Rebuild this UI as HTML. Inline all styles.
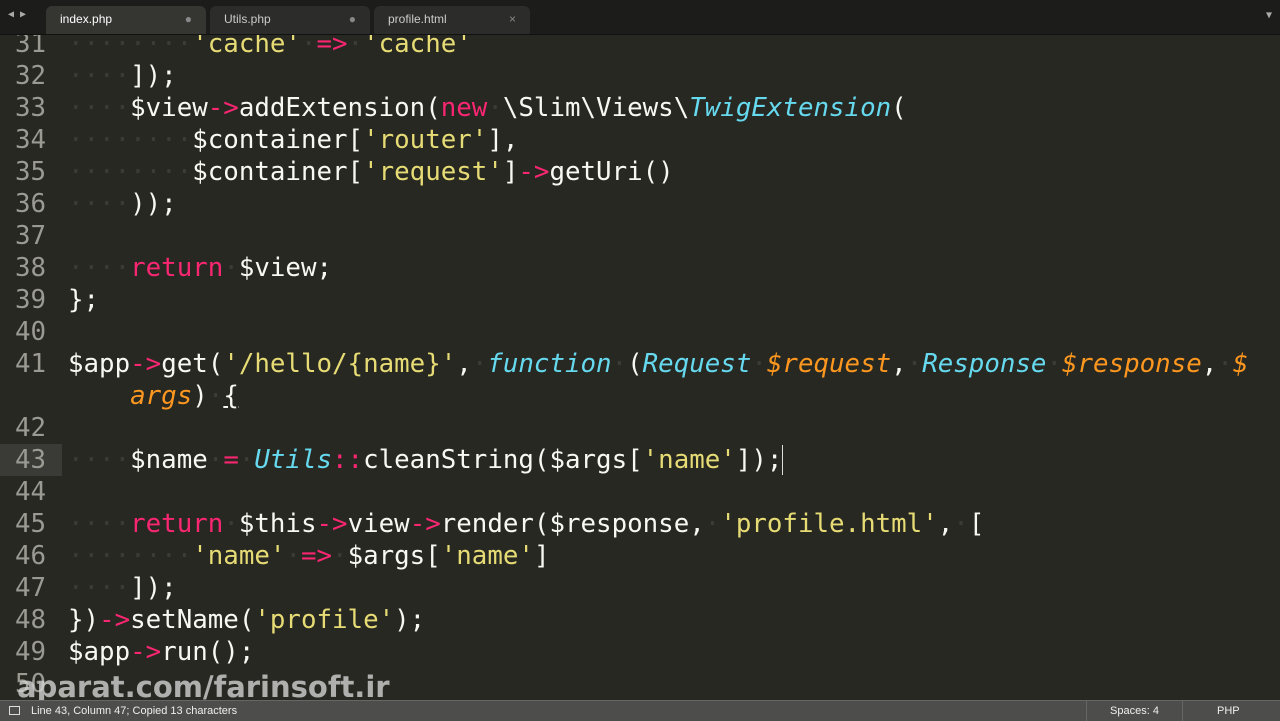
<!DOCTYPE html>
<html><head><meta charset="utf-8"><style>
body{margin:0;width:1280px;height:720px;overflow:hidden;background:#272822;position:relative;font-family:"DejaVu Sans Mono","Liberation Mono",monospace}
#tabs{position:absolute;left:0;top:0;width:1280px;height:34px;background:#1c1c1a;border-bottom:1px solid #111}
.tab{position:absolute;top:6px;height:28px;font:12px "Liberation Sans",sans-serif;color:#ccc;line-height:26px;padding-left:14px;box-sizing:border-box;border-radius:6px 6px 0 0;background:#2c2c2a}
.tab.a{background:#353531;color:#fff}
.tab span{position:absolute;right:14px;color:#888}
#code{position:absolute;left:0;top:28px;width:1280px;font-size:25.8px;line-height:32px;color:#f8f8f2}
.r{height:32px;position:relative;white-space:pre}
.n{position:absolute;left:0;width:46px;text-align:right;color:#9a9a93}
.c{position:absolute;left:68px}
.d{color:#3c3c37}.k{color:#f92672}.s{color:#e6db74}.f{color:#66d9ef;font-style:italic}.o{color:#fd971f;font-style:italic}
#status{position:absolute;left:0;top:700px;width:1280px;height:20px;background:#4d4d4b;border-top:1px solid #666;font:11px "Liberation Sans",sans-serif;color:#eee;line-height:20px}
#wm{position:absolute;left:17px;top:670px;font:bold 29px "DejaVu Sans",sans-serif;color:rgba(210,210,210,0.8)}
</style></head><body>
<div id="code"><div class="r"><span class="n">31</span><span class="c"><span class="d">········</span><span class="s">'cache'</span><span class="d">·</span><span class="k">=&gt;</span><span class="d">·</span><span class="s">'cache'</span></span></div><div class="r"><span class="n">32</span><span class="c"><span class="d">····</span>]);</span></div><div class="r"><span class="n">33</span><span class="c"><span class="d">····</span>$view<span class="k">-&gt;</span>addExtension(<span class="k">new</span><span class="d">·</span>\Slim\Views\<span class="f">TwigExtension</span>(</span></div><div class="r"><span class="n">34</span><span class="c"><span class="d">········</span>$container[<span class="s">'router'</span>],</span></div><div class="r"><span class="n">35</span><span class="c"><span class="d">········</span>$container[<span class="s">'request'</span>]<span class="k">-&gt;</span>getUri()</span></div><div class="r"><span class="n">36</span><span class="c"><span class="d">····</span>));</span></div><div class="r"><span class="n">37</span></div><div class="r"><span class="n">38</span><span class="c"><span class="d">····</span><span class="k">return</span><span class="d">·</span>$view;</span></div><div class="r"><span class="n">39</span><span class="c">};</span></div><div class="r"><span class="n">40</span></div><div class="r"><span class="n">41</span><span class="c">$app<span class="k">-&gt;</span>get(<span class="s">'/hello/{name}'</span>,<span class="d">·</span><span class="f">function</span><span class="d">·</span>(<span class="f">Request</span><span class="d">·</span><span class="o">$request</span>,<span class="d">·</span><span class="f">Response</span><span class="d">·</span><span class="o">$response</span>,<span class="d">·</span><span class="o">$</span></span></div><div class="r"><span class="c">    <span class="o">args</span>)<span class="d">·</span><u>{</u></span></div><div class="r"><span class="n">42</span></div><div class="r"><span class="n" style="background:#3a3a36;width:62px;padding-right:16px;box-sizing:border-box">43</span><span class="c"><span class="d">····</span>$name<span class="d">·</span><span class="k">=</span><span class="d">·</span><span class="f">Utils</span><span class="k">::</span>cleanString($args[<span class="s">'name'</span>]);<span style="border-left:1px solid #ddd"></span></span></div><div class="r"><span class="n">44</span></div><div class="r"><span class="n">45</span><span class="c"><span class="d">····</span><span class="k">return</span><span class="d">·</span>$this<span class="k">-&gt;</span>view<span class="k">-&gt;</span>render($response,<span class="d">·</span><span class="s">'profile.html'</span>,<span class="d">·</span>[</span></div><div class="r"><span class="n">46</span><span class="c"><span class="d">········</span><span class="s">'name'</span><span class="d">·</span><span class="k">=&gt;</span><span class="d">·</span>$args[<span class="s">'name'</span>]</span></div><div class="r"><span class="n">47</span><span class="c"><span class="d">····</span>]);</span></div><div class="r"><span class="n">48</span><span class="c">})<span class="k">-&gt;</span>setName(<span class="s">'profile'</span>);</span></div><div class="r"><span class="n">49</span><span class="c">$app<span class="k">-&gt;</span>run();</span></div><div class="r"><span class="n">50</span></div></div>
<div id="tabs">
<div style="position:absolute;left:8px;top:9px;color:#aaa;font-size:10px">◀ ▶</div>
<div class="tab a" style="left:46px;width:160px">index.php<span>●</span></div>
<div class="tab" style="left:210px;width:160px">Utils.php<span>●</span></div>
<div class="tab" style="left:374px;width:156px">profile.html<span>×</span></div>
<div style="position:absolute;right:8px;top:10px;color:#aaa;font-size:10px">▼</div>
</div>
<div id="wm">aparat.com/farinsoft.ir</div>
<div id="status">
<span style="position:absolute;left:9px;top:5px;width:11px;height:9px;border:1px solid #ddd;box-sizing:border-box"></span>
<span style="position:absolute;left:31px">Line 43, Column 47; Copied 13 characters</span>
<span style="position:absolute;left:1086px;width:95px;height:20px;border-left:1px solid #666;border-right:1px solid #666;text-align:center">Spaces: 4</span>
<span style="position:absolute;left:1217px">PHP</span>
</div>
</body></html>
